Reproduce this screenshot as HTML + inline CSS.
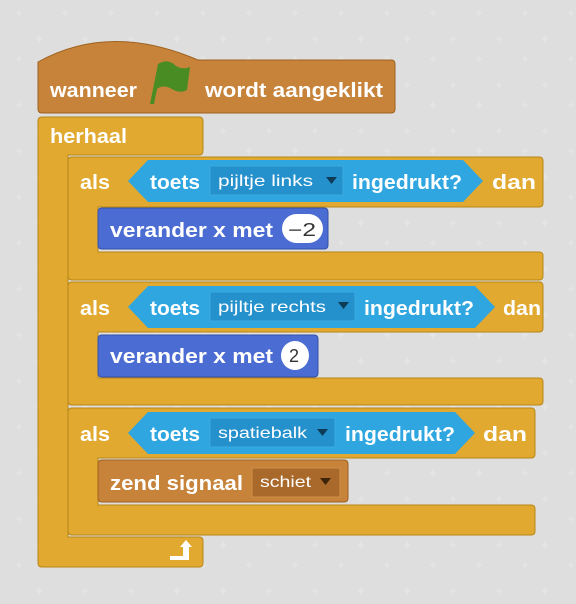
<!DOCTYPE html>
<html><head><meta charset="utf-8"><style>
html,body{margin:0;padding:0;background:#dddedd;}
svg{display:block}
text{font-family:"Liberation Sans",sans-serif;font-weight:bold;fill:#fff;}
.d{font-weight:normal;font-size:16px}
</style></head><body>
<svg width="576" height="604" viewBox="0 0 576 604" xmlns="http://www.w3.org/2000/svg">
<defs>
<pattern id="g" x="0" y="0" width="46" height="46" patternUnits="userSpaceOnUse">
<path d="M19 10v6M16 13h6M39 36v6M36 39h6" stroke="#e4e5e5" stroke-width="1.5"/>
</pattern>
</defs>
<rect width="576" height="604" fill="#dddedd"/>
<rect width="576" height="604" fill="url(#g)"/>

<!-- herhaal C -->
<path d="M38,121 q0,-4 4,-4 L199,117 q4,0 4,4 L203,151 q0,4 -4,4 L68,155 L68,537 L199,537 q4,0 4,4 L203,563 q0,4 -4,4 L42,567 q-4,0 -4,-4 Z" fill="#e1a92f" stroke="#b88616" stroke-width="1"/>
<!-- hat -->
<path d="M38,62 Q110,22 198,60 L391,60 q4,0 4,4 L395,109 q0,4 -4,4 L42,113 q-4,0 -4,-4 Z" fill="#c7833a" stroke="#9e6220" stroke-width="1"/>

<!-- if1 -->
<path d="M68,161 q0,-4 4,-4 L539,157 q4,0 4,4 L543,203 q0,4 -4,4 L98,207 L98,252 L539,252 q4,0 4,4 L543,276 q0,4 -4,4 L72,280 q-4,0 -4,-4 Z" fill="#e1a92f" stroke="#b88616"/>
<!-- if2 -->
<path d="M68,286 q0,-4 4,-4 L539,282 q4,0 4,4 L543,328 q0,4 -4,4 L98,332 L98,378 L539,378 q4,0 4,4 L543,401 q0,4 -4,4 L72,405 q-4,0 -4,-4 Z" fill="#e1a92f" stroke="#b88616"/>
<!-- if3 -->
<path d="M68,412 q0,-4 4,-4 L531,408 q4,0 4,4 L535,454 q0,4 -4,4 L98,458 L98,505 L531,505 q4,0 4,4 L535,531 q0,4 -4,4 L72,535 q-4,0 -4,-4 Z" fill="#e1a92f" stroke="#b88616"/>

<!-- predicates -->
<polygon points="128,181 148,160 463,160 483,181 463,202 148,202" fill="#2fa6e0"/>
<rect x="210" y="166" width="133" height="29" fill="#2591cc" stroke="#3aa9e0"/>
<polygon points="326,177 337,177 331.5,184" fill="#0e3b55"/>
<polygon points="128,307 148,286 475,286 495,307 475,328 148,328" fill="#2fa6e0"/>
<rect x="210" y="292" width="145" height="29" fill="#2591cc" stroke="#3aa9e0"/>
<polygon points="338,302 349,302 343.5,309" fill="#0e3b55"/>
<polygon points="128,433 148,412 455,412 475,433 455,454 148,454" fill="#2fa6e0"/>
<rect x="210" y="418" width="125" height="29" fill="#2591cc" stroke="#3aa9e0"/>
<polygon points="317,429 328,429 322.5,436" fill="#0e3b55"/>

<!-- motion -->
<path d="M98,212 q0,-4 4,-4 L324,208 q4,0 4,4 L328,245 q0,4 -4,4 L102,249 q-4,0 -4,-4 Z" fill="#4b6cd2" stroke="#3451a8"/>
<rect x="282" y="214" width="41" height="29" rx="14.5" fill="#fff"/>
<path d="M98,339 q0,-4 4,-4 L314,335 q4,0 4,4 L318,373 q0,4 -4,4 L102,377 q-4,0 -4,-4 Z" fill="#4b6cd2" stroke="#3451a8"/>
<rect x="281" y="341" width="28" height="29" rx="14.5" fill="#fff"/>
<!-- zend -->
<path d="M98,464 q0,-4 4,-4 L344,460 q4,0 4,4 L348,498 q0,4 -4,4 L102,502 q-4,0 -4,-4 Z" fill="#c7833a" stroke="#9e6220"/>
<rect x="252" y="468" width="88" height="29" fill="#a8692b" stroke="#cf8f48"/>
<polygon points="320,478 331,478 325.5,485" fill="#3d230a"/>

<!-- flag -->
<path d="M150,104 L158,64 Q168,58 176,66 Q183,70 190,67 L187,90 Q180,94 172,89 Q163,84 157,89 L154,104 Z" fill="#4a8c24"/>
<!-- repeat arrow -->
<path d="M170,556 L183,556 L183,547 L180,547 L186,540 L192,547 L189,547 L189,560 L170,560 Z" fill="#fff"/>

<!-- texts -->
<g font-size="20">
<text x="50" y="97" textLength="87" lengthAdjust="spacingAndGlyphs">wanneer</text>
<text x="205" y="97" textLength="178" lengthAdjust="spacingAndGlyphs">wordt  aangeklikt</text>
<text x="50" y="143" textLength="77" lengthAdjust="spacingAndGlyphs">herhaal</text>

<text x="80" y="189" textLength="30" lengthAdjust="spacingAndGlyphs">als</text>
<text x="150" y="189" textLength="50" lengthAdjust="spacingAndGlyphs">toets</text>
<text x="352" y="189" textLength="110" lengthAdjust="spacingAndGlyphs">ingedrukt?</text>
<text x="492" y="189" textLength="44" lengthAdjust="spacingAndGlyphs">dan</text>

<text x="80" y="315" textLength="30" lengthAdjust="spacingAndGlyphs">als</text>
<text x="150" y="315" textLength="50" lengthAdjust="spacingAndGlyphs">toets</text>
<text x="364" y="315" textLength="110" lengthAdjust="spacingAndGlyphs">ingedrukt?</text>
<text x="503" y="315" textLength="38" lengthAdjust="spacingAndGlyphs">dan</text>

<text x="80" y="441" textLength="30" lengthAdjust="spacingAndGlyphs">als</text>
<text x="150" y="441" textLength="50" lengthAdjust="spacingAndGlyphs">toets</text>
<text x="345" y="441" textLength="110" lengthAdjust="spacingAndGlyphs">ingedrukt?</text>
<text x="483" y="441" textLength="44" lengthAdjust="spacingAndGlyphs">dan</text>

<text x="110" y="237" textLength="163" lengthAdjust="spacingAndGlyphs">verander  x  met</text>
<text x="110" y="363" textLength="163" lengthAdjust="spacingAndGlyphs">verander  x  met</text>
<text x="110" y="490" textLength="133" lengthAdjust="spacingAndGlyphs">zend  signaal</text>
</g>
<text class="d" x="218" y="186" textLength="95" lengthAdjust="spacingAndGlyphs">pijltje links</text>
<text class="d" x="218" y="312" textLength="108" lengthAdjust="spacingAndGlyphs">pijltje rechts</text>
<text class="d" x="218" y="438" textLength="89" lengthAdjust="spacingAndGlyphs">spatiebalk</text>
<text class="d" x="260" y="487" textLength="51" lengthAdjust="spacingAndGlyphs">schiet</text>
<text x="288" y="236" font-size="18" style="fill:#333;font-weight:normal" textLength="28" lengthAdjust="spacingAndGlyphs">−2</text>
<text x="289" y="362" font-size="18" style="fill:#333;font-weight:normal">2</text>
</svg>
</body></html>
